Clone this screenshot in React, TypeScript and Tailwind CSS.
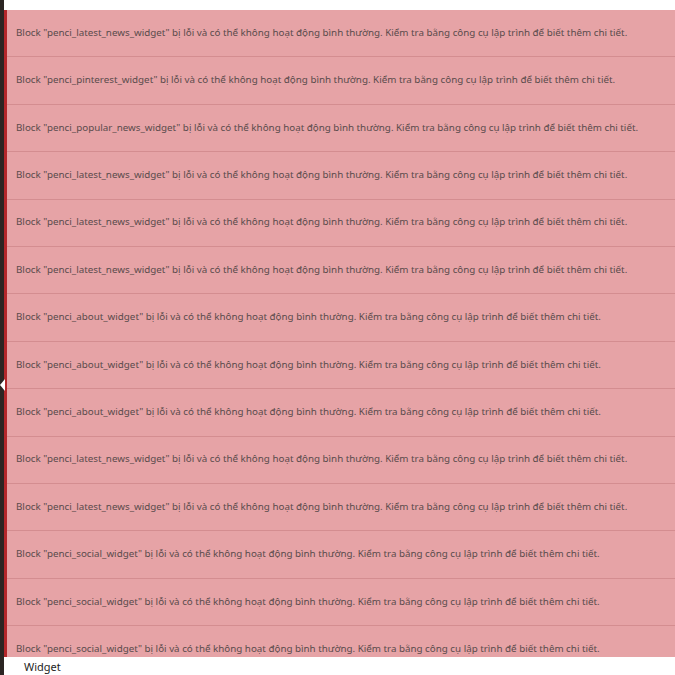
const WIDGETS = [
  "penci_latest_news_widget",
  "penci_pinterest_widget",
  "penci_popular_news_widget",
  "penci_latest_news_widget",
  "penci_latest_news_widget",
  "penci_latest_news_widget",
  "penci_about_widget",
  "penci_about_widget",
  "penci_about_widget",
  "penci_latest_news_widget",
  "penci_latest_news_widget",
  "penci_social_widget",
  "penci_social_widget",
  "penci_social_widget",
];

export default function App() {
  return (
    <div className="relative flex h-[675px] w-[675px] overflow-hidden bg-white font-['Noto_Sans',sans-serif]">
      <div className="w-[4px] shrink-0 bg-[#2b2523]" />
      <div className="flex min-w-0 grow flex-col">
        <div className="h-[10px] shrink-0 bg-white" />
        <div className="h-[647px] shrink-0 overflow-hidden border-l-[3px] border-[#b3272b] bg-[#e6a3a6]">
          {WIDGETS.map((name, i) => (
            <div
              key={i}
              className="flex h-[47.4px] items-center whitespace-nowrap border-b border-[#d48d90] pl-[9px] text-[9.8px] text-[#5a4b4c]"
            >
              Block "{name}" bị lỗi và có thể không hoạt động bình thường. Kiểm tra bằng công cụ lập trình để biết thêm
              chi tiết.
            </div>
          ))}
        </div>
        <div className="pl-[20px] pt-[2px] text-[11px] text-[#1e1e1e]">Widget</div>
      </div>
      <div className="absolute left-0 top-[379px] h-0 w-0 border-y-[6px] border-r-[5px] border-y-transparent border-r-white" />
    </div>
  );
}
